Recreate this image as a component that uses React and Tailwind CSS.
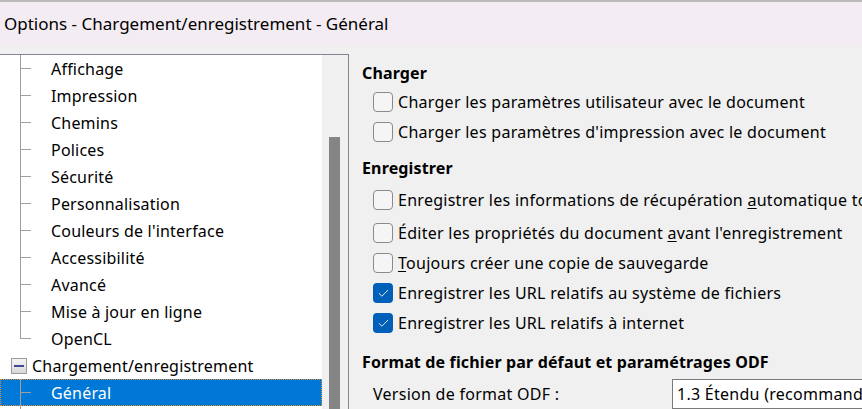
import { Check } from 'lucide-react';

const treeItems = [
    'Affichage',
    'Impression',
    'Chemins',
    'Polices',
    'Sécurité',
    'Personnalisation',
    "Couleurs de l'interface",
    'Accessibilité',
    'Avancé',
    'Mise à jour en ligne',
    'OpenCL',
];

function TreeRow({ label, last, selected }) {
    return (
        <div
            className={`flex h-[27px] items-center ${
                selected ? 'bg-[#0078d7] text-white outline-1 outline-dotted outline-[#e08a2c] -outline-offset-1' : 'text-black'
            }`}
        >
            <div className="w-[20px] shrink-0" />
            {/* connecteur de l'arbre */}
            <div className="flex h-full w-[11px] shrink-0 flex-col">
                <div className="h-1/2 border-b border-l border-[#a0a0a0]" />
                <div className={`h-1/2 ${last ? '' : 'border-l border-[#a0a0a0]'}`} />
            </div>
            <span className="ml-[20px] whitespace-nowrap">{label}</span>
        </div>
    );
}

function Checkbox({ checked }) {
    if (checked) {
        return (
            <div className="flex h-[20px] w-[20px] shrink-0 items-center justify-center rounded-[4px] bg-[#005fb8]">
                <Check size={13} strokeWidth={1.6} className="text-white" />
            </div>
        );
    }
    return <div className="h-[20px] w-[20px] shrink-0 rounded-[4px] border border-[#8a8a8a] bg-[#f5f5f5]" />;
}

function Option({ checked, children, tall }) {
    return (
        <div className={`flex items-center gap-[5px] pl-[11px] ${tall ? 'h-[36px]' : 'h-[30px]'}`}>
            <Checkbox checked={checked} />
            <span className="whitespace-nowrap">{children}</span>
        </div>
    );
}

function Heading({ children, className }) {
    return (
        <div className={`flex h-[28px] items-center font-bold tracking-[0.15px] whitespace-nowrap ${className}`}>
            {children}
        </div>
    );
}

export default function App() {
    return (
        <div
            className="flex h-[409px] w-[862px] flex-col overflow-hidden bg-[#f0f0f0] text-[16px] text-black"
            style={{ fontFamily: '"Noto Sans", "Open Sans", sans-serif' }}
        >
            <div className="h-[2px] shrink-0 bg-[#bcbcbc]" />
            <div className="flex h-[44px] shrink-0 items-center bg-[#f4ecf3] pl-[4px] text-[17px]">
                Options - Chargement/enregistrement - Général
            </div>

            <div className="flex min-h-0 flex-1">
                {/* panneau arborescence */}
                <div className="mt-[8px] flex w-[349px] shrink-0 border-t border-r border-[#828790] bg-white tracking-[0.2px]">
                    <div className="flex flex-1 flex-col">
                        {treeItems.map((item, i) => (
                            <TreeRow key={item} label={item} last={i === treeItems.length - 1} />
                        ))}
                        <div className="flex h-[27px] items-center">
                            <div className="ml-[11px] flex h-[16px] w-[16px] items-center justify-center border border-[#9a9a9a] bg-gradient-to-b from-[#f4f4f4] to-[#d8d8d8]">
                                <div className="h-[2px] w-[10px] bg-[#3b4a9c]" />
                            </div>
                            <span className="ml-[5px] whitespace-nowrap">Chargement/enregistrement</span>
                        </div>
                        <TreeRow label="Général" selected />
                        <div className="flex flex-1">
                            <div className="ml-[20px] border-l border-[#a0a0a0]" />
                        </div>
                    </div>
                    {/* barre de défilement */}
                    <div className="flex w-[26px] shrink-0 flex-col bg-[#f0f0f0] pt-[82px] pl-[7px]">
                        <div className="w-[11px] flex-1 bg-[#858585]" />
                    </div>
                </div>

                {/* panneau des options */}
                <div className="flex min-w-0 flex-1 flex-col pl-[13px] tracking-[0.27px]">
                    <Heading className="mt-[13px]">Charger</Heading>
                    <Option>Charger les paramètres utilisateur avec le document</Option>
                    <Option>Charger les paramètres d'impression avec le document</Option>

                    <Heading className="mt-[7px]">Enregistrer</Heading>
                    <Option tall>
                        Enregistrer les informations de récupération <span className="underline underline-offset-2">a</span>utomatique toutes les
                    </Option>
                    <Option>
                        Éditer les propriétés du document <span className="underline underline-offset-2">a</span>vant l'enregistrement
                    </Option>
                    <Option>
                        <span className="underline underline-offset-2">T</span>oujours créer une copie de sauvegarde
                    </Option>
                    <Option checked>Enregistrer les URL relatifs au système de fichiers</Option>
                    <Option checked>Enregistrer les URL relatifs à internet</Option>

                    <Heading className="mt-[10px]">Format de fichier par défaut et paramétrages ODF</Heading>
                    <div className="mt-[3px] flex h-[30px] items-center pl-[11px]">
                        <span className="w-[299px] shrink-0 whitespace-nowrap">Version de format ODF :</span>
                        <div className="flex h-[30px] flex-1 items-center border border-[#7a7a7a] bg-white pl-[4px] whitespace-nowrap">
                            1.3 Étendu (recommandé)
                        </div>
                    </div>
                </div>
            </div>
        </div>
    );
}
